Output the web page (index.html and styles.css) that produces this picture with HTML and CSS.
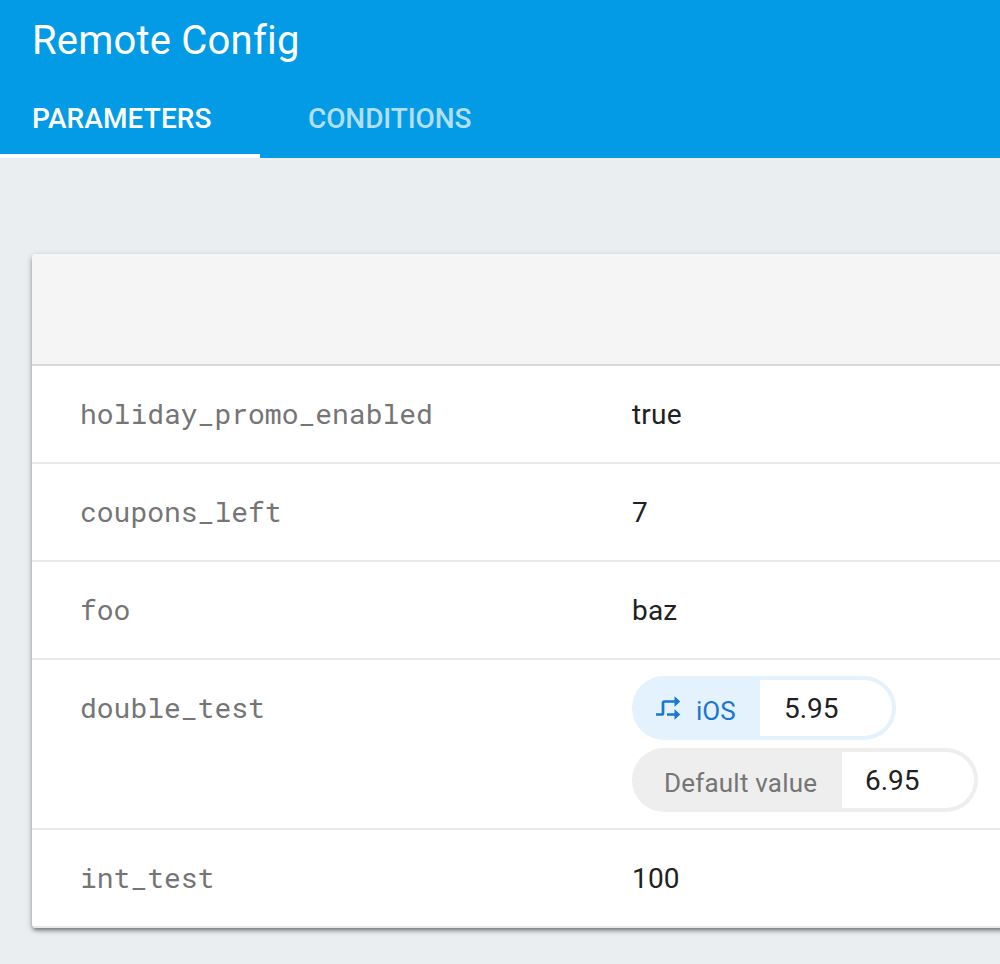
FILE: index.html
```html
<!DOCTYPE html>
<html lang="en">
<head>
<meta charset="utf-8">
<title>Remote Config</title>
<link rel="stylesheet" href="styles.css">
</head>
<body>
<header class="header">
  <h1 class="title">Remote Config</h1>
  <nav class="tabs">
    <a class="tab tab-active">PARAMETERS</a>
    <a class="tab">CONDITIONS</a>
  </nav>
</header>
<main class="card">
  <div class="card-head"></div>
  <div class="row"><div class="key">holiday_promo_enabled</div><div class="value">true</div></div>
  <div class="row"><div class="key">coupons_left</div><div class="value">7</div></div>
  <div class="row"><div class="key">foo</div><div class="value">baz</div></div>
  <div class="row row-tall">
    <div class="key">double_test</div>
    <div class="chips">
      <div class="chip chip-ios">
        <div class="chip-label">
          <svg class="icon" width="26" height="26" viewBox="0 0 26 26">
            <path d="M0 19.500H5.500Q7 19.500 7 18V8Q7 6.500 8.500 6.500H19M11 19.500H19" fill="none" stroke="#1976d2" stroke-width="2.700"/>
            <path d="M18.500 1.300L24.300 6.500L18.500 11.700ZM18.500 14.300L24.300 19.500L18.500 24.700Z" fill="#1976d2"/>
          </svg>
          <span>iOS</span>
        </div>
        <div class="chip-value">5.95</div>
      </div>
      <div class="chip chip-default">
        <div class="chip-label"><span>Default value</span></div>
        <div class="chip-value">6.95</div>
      </div>
    </div>
  </div>
  <div class="row"><div class="key">int_test</div><div class="value">100</div></div>
</main>
</body>
</html>
```

FILE: styles.css
```css
* { box-sizing: border-box; }
body {
  margin: 0;
  height: 964px;
  overflow: hidden;
  background: #eaeef1;
  font-family: Roboto, sans-serif;
  color: #212121;
}
.header { height: 158px; background: #039be5; color: #fff; }
.title {
  margin: 0;
  height: 80px;
  padding-left: 32px;
  font-size: 40px;
  font-weight: 400;
  line-height: 82px;
  letter-spacing: 0.2px;
}
.tabs { display: flex; height: 78px; font-size: 28px; font-weight: 500; line-height: 78px; }
.tab { width: 260px; height: 78px; padding-left: 48px; color: rgba(255, 255, 255, 0.7); letter-spacing: -0.1px; }
.tab-active { padding-left: 32px; color: #fff; border-bottom: 4px solid #fff; letter-spacing: 0.1px; }
.card {
  width: 1000px;
  margin: 96px 0 0 32px;
  background: #fff;
  border-radius: 4px;
  box-shadow: 0 3px 4px -1px rgba(0, 0, 0, 0.45), 0 2px 7px rgba(0, 0, 0, 0.2);
}
.card-head {
  height: 112px;
  background: #f5f5f5;
  border-bottom: 2px solid #d6d6d6;
  border-radius: 4px 4px 0 0;
}
.row {
  display: flex;
  height: 98px;
  padding-left: 48px;
  border-bottom: 2px solid #e8e8e8;
  font-size: 28px;
  line-height: 98px;
}
.row:last-child { border-radius: 0 0 4px 4px; }
.row-tall { height: 170px; }
.key {
  width: 552px;
  color: #757575;
  font-family: "Roboto Mono", "Liberation Mono", monospace;
  line-height: 96px;
}
.value { letter-spacing: 0.2px; }
.chips { display: flex; flex-direction: column; align-items: flex-start; gap: 8px; padding-top: 16px; }
.chip { display: flex; height: 64px; padding: 4px; border-radius: 32px; line-height: 56px; }
.chip-ios { width: 264px; background: #e3f2fd; color: #1976d2; }
.chip-default { width: 346px; background: #eee; color: #757575; }
.chip-label { display: flex; width: 124px; padding: 3px 0 0 20px; font-size: 26px; }
.chip-default .chip-label { width: 206px; padding-left: 28px; letter-spacing: 0.2px; }
.icon { margin: 12px 14px 0 0; }
.chip-value {
  flex: 1;
  padding-left: 24px;
  background: #fff;
  border-radius: 0 28px 28px 0;
  color: #212121;
  line-height: 58px;
}
.chip-default .chip-value { padding-left: 23px; }
```
